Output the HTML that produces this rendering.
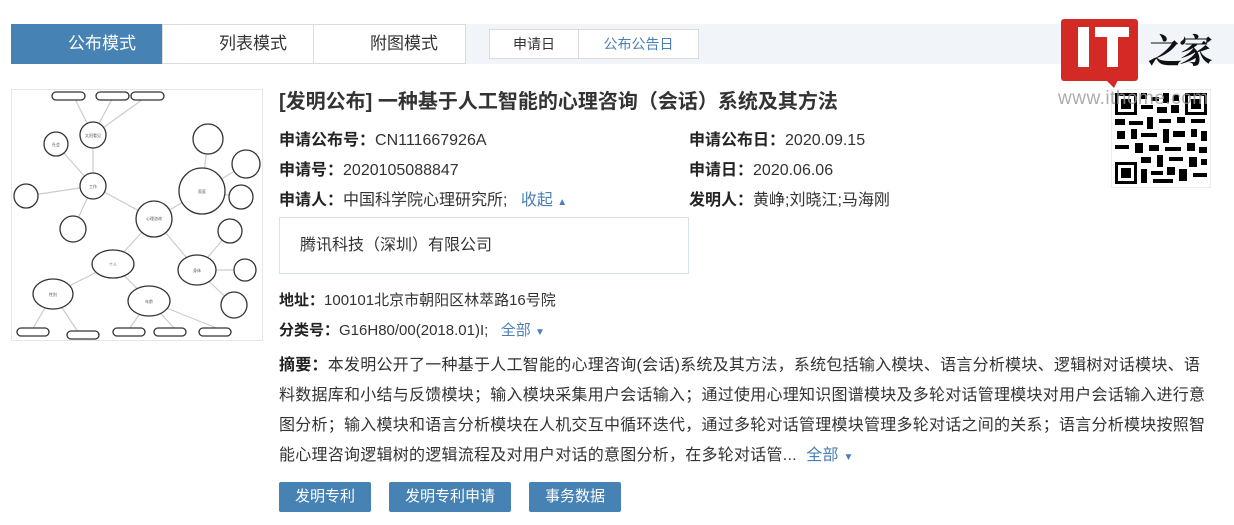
<!DOCTYPE html>
<html><head><meta charset="utf-8"><style>
*{margin:0;padding:0;box-sizing:border-box}
body{width:1234px;height:525px;background:#fff;font-family:"Liberation Sans","Noto Sans CJK SC",sans-serif;color:#333;position:relative;overflow:hidden}
.a{position:absolute;white-space:nowrap}
.bar{left:11px;top:24px;width:1223px;height:40px;background:#f1f4f9}
.tab{top:24px;height:40px;font-size:17px;line-height:38px;background:#fff;border:1px solid #dcdcdc;color:#333}
.db{top:29px;height:30px;font-size:14px;line-height:28px;background:#fff;border:1px solid #dcdcdc;text-align:center}
.row{font-size:16px;line-height:20px;color:#333}
.r15{font-size:15px}
.row b{font-weight:bold;color:#222}
.blue{color:#4a7fb5}
.btn{top:482px;height:30px;background:#4682b4;color:#fff;font-size:15px;line-height:30px;text-align:center;border-radius:2px}
.abs{left:279px;top:351px;font-size:16px;line-height:30px;color:#333;letter-spacing:0.25px}
</style></head><body>
<div class="a bar"></div>
<div class="a tab" style="left:11px;width:152px;background:#4682b4;border-color:#4682b4;color:#fff;padding-left:56px">公布模式</div>
<div class="a tab" style="left:162px;width:152px;padding-left:56px">列表模式</div>
<div class="a tab" style="left:313px;width:153px;padding-left:56px">附图模式</div>
<div class="a db" style="left:489px;width:90px">申请日</div>
<div class="a db blue" style="left:578px;width:121px">公布公告日</div>
<div class="a" style="left:1080px;top:34px;font-size:14px">每页3</div>
<!-- logo -->
<div class="a" style="left:1061px;top:19px;width:77px;height:62px;background:#d42a25;border-radius:3px"></div>
<div class="a" style="left:1106px;top:80px;width:0;height:0;border-left:8px solid transparent;border-right:4px solid transparent;border-top:8px solid #d42a25"></div>
<div class="a" style="left:1078px;top:27px;width:11px;height:40px;background:#fff"></div>
<div class="a" style="left:1095px;top:27px;width:34px;height:10px;background:#fff"></div>
<div class="a" style="left:1107px;top:27px;width:11px;height:40px;background:#fff"></div>
<div class="a" style="left:1148px;top:24px;font-size:34px;font-weight:bold;color:#111;font-family:'Noto Serif CJK SC',serif;line-height:50px;letter-spacing:-3px">之家</div>
<!-- QR -->
<svg class="a" style="left:1111px;top:89px" width="100" height="99" viewBox="0 0 100 99">
<rect width="100" height="99" fill="#fff" stroke="#ddd"/>
<g fill="#000">
<rect x="4" y="4" width="22" height="22"/><rect x="7" y="7" width="16" height="16" fill="#fff"/><rect x="10" y="10" width="10" height="10"/>
<rect x="74" y="4" width="22" height="22"/><rect x="77" y="7" width="16" height="16" fill="#fff"/><rect x="80" y="10" width="10" height="10"/>
<rect x="4" y="73" width="22" height="22"/><rect x="7" y="76" width="16" height="16" fill="#fff"/><rect x="10" y="79" width="10" height="10"/>
<path d="M30 4h6v6h-6zM40 8h8v4h-8zM52 4h6v10h-6zM62 6h6v6h-6zM30 16h12v4H30zM46 18h10v6H46zM60 16h8v8h-8zM4 30h10v6H4zM18 32h14v4H18zM36 28h6v12h-6zM48 30h12v4H48zM66 28h8v6h-8zM80 30h14v4H80zM6 42h8v8H6zM20 40h6v10h-6zM30 44h16v4H30zM52 40h6v14h-6zM62 42h12v6H62zM80 40h6v8h-6zM90 42h6v10h-6zM4 56h14v4H4zM24 54h8v10h-8zM38 56h10v6H38zM54 58h16v4H54zM76 54h8v8h-8zM88 58h8v6h-8zM30 68h10v6H30zM46 66h6v12h-6zM58 68h14v4H58zM78 68h8v10h-8zM90 70h6v6h-6zM30 80h6v14h-6zM40 82h12v4H40zM56 78h8v8h-8zM68 80h8v12h-8zM82 84h14v4H82zM42 90h20v4H42z"/>
</g></svg>
<div class="a" style="left:1058px;top:88px;font-size:19px;color:#999;letter-spacing:0.5px;opacity:0.8">www.ithome.com</div>
<!-- mind map image -->
<svg class="a" style="left:11px;top:89px" width="252" height="252" viewBox="0 0 252 252" font-size="4" font-family="Liberation Sans">
<rect x="0.5" y="0.5" width="251" height="251" fill="#fff" stroke="#e6e6e6"/>
<g stroke="#ccc" stroke-width="1.2">
<line x1="82" y1="46" x2="82" y2="97"/><line x1="82" y1="46" x2="63" y2="8"/><line x1="82" y1="46" x2="102" y2="8"/><line x1="82" y1="46" x2="135" y2="8"/>
<line x1="45" y1="55" x2="82" y2="97"/><line x1="15" y1="107" x2="82" y2="97"/><line x1="62" y1="140" x2="82" y2="97"/><line x1="82" y1="97" x2="143" y2="130"/>
<line x1="143" y1="130" x2="191" y2="102"/><line x1="191" y1="102" x2="197" y2="50"/><line x1="191" y1="102" x2="235" y2="75"/><line x1="191" y1="102" x2="230" y2="108"/>
<line x1="143" y1="130" x2="102" y2="175"/><line x1="143" y1="130" x2="186" y2="181"/><line x1="186" y1="181" x2="219" y2="142"/><line x1="186" y1="181" x2="234" y2="181"/><line x1="186" y1="181" x2="223" y2="216"/>
<line x1="102" y1="175" x2="42" y2="205"/><line x1="102" y1="175" x2="138" y2="212"/><line x1="42" y1="205" x2="20" y2="243"/><line x1="42" y1="205" x2="69" y2="246"/><line x1="138" y1="212" x2="118" y2="240"/><line x1="138" y1="212" x2="164" y2="240"/><line x1="138" y1="212" x2="208" y2="240"/>
</g>
<g fill="#fff" stroke="#333" stroke-width="1.3">
<rect x="41" y="3" width="33" height="8" rx="4"/><rect x="85" y="3" width="33" height="8" rx="4"/><rect x="120" y="3" width="33" height="8" rx="4"/>
<circle cx="82" cy="46" r="13"/><circle cx="45" cy="55" r="12"/><circle cx="197" cy="50" r="15"/><circle cx="235" cy="75" r="14"/>
<circle cx="82" cy="97" r="13"/><circle cx="15" cy="107" r="12"/><circle cx="191" cy="102" r="23"/><circle cx="230" cy="108" r="12"/>
<circle cx="62" cy="140" r="13"/><circle cx="143" cy="130" r="18"/><circle cx="219" cy="142" r="12"/>
<ellipse cx="102" cy="175" rx="21" ry="14"/><ellipse cx="186" cy="181" rx="19" ry="15"/><circle cx="234" cy="181" r="11"/><circle cx="223" cy="216" r="13"/>
<ellipse cx="42" cy="205" rx="20" ry="15"/><ellipse cx="138" cy="212" rx="21" ry="15"/>
<rect x="6" y="239" width="32" height="8" rx="4"/><rect x="56" y="242" width="32" height="8" rx="4"/><rect x="102" y="239" width="32" height="8" rx="4"/><rect x="143" y="239" width="32" height="8" rx="4"/><rect x="188" y="239" width="32" height="8" rx="4"/>
</g>
<g fill="#555" text-anchor="middle"><text x="82" y="48">太阳看见</text><text x="45" y="57">社会</text><text x="82" y="99">工作</text><text x="143" y="131">心理咨询</text><text x="191" y="104">家庭</text><text x="102" y="177">个人</text><text x="186" y="183">身体</text><text x="138" y="214">年龄</text><text x="42" y="207">性别</text></g>
</svg>
<!-- content -->
<div class="a" style="left:279px;top:89px;font-size:20px;font-weight:bold;color:#333;line-height:26px">[发明公布] 一种基于人工智能的心理咨询（会话）系统及其方法</div>
<div class="a row" style="left:279px;top:131px"><b>申请公布号：</b>CN111667926A</div>
<div class="a row" style="left:689px;top:131px"><b>申请公布日：</b>2020.09.15</div>
<div class="a row" style="left:279px;top:161px"><b>申请号：</b>2020105088847</div>
<div class="a row" style="left:689px;top:161px"><b>申请日：</b>2020.06.06</div>
<div class="a row" style="left:279px;top:191px"><b>申请人：</b>中国科学院心理研究所; &nbsp;&nbsp;<span class="blue">收起 <span style="font-size:10px">▲</span></span></div>
<div class="a row" style="left:689px;top:191px"><b>发明人：</b>黄峥;刘晓江;马海刚</div>
<div class="a" style="left:279px;top:217px;width:410px;height:57px;border:1px solid #d6e3ef"></div>
<div class="a row" style="left:300px;top:236px">腾讯科技（深圳）有限公司</div>
<div class="a row r15" style="left:279px;top:291px"><b>地址：</b>100101北京市朝阳区林萃路16号院</div>
<div class="a row r15" style="left:279px;top:321px"><b>分类号：</b>G16H80/00(2018.01)I; &nbsp;&nbsp;<span class="blue">全部 <span style="font-size:10px">▼</span></span></div>
<div class="a abs"><b style="color:#222">摘要：</b>本发明公开了一种基于人工智能的心理咨询(会话)系统及其方法，系统包括输入模块、语言分析模块、逻辑树对话模块、语<br>料数据库和小结与反馈模块；输入模块采集用户会话输入；通过使用心理知识图谱模块及多轮对话管理模块对用户会话输入进行意<br>图分析；输入模块和语言分析模块在人机交互中循环迭代，通过多轮对话管理模块管理多轮对话之间的关系；语言分析模块按照智<br>能心理咨询逻辑树的逻辑流程及对用户对话的意图分析，在多轮对话管... &nbsp;<span class="blue">全部 <span style="font-size:10px">▼</span></span></div>
<div class="a btn" style="left:279px;width:92px">发明专利</div>
<div class="a btn" style="left:389px;width:122px">发明专利申请</div>
<div class="a btn" style="left:529px;width:92px">事务数据</div>
</body></html>
